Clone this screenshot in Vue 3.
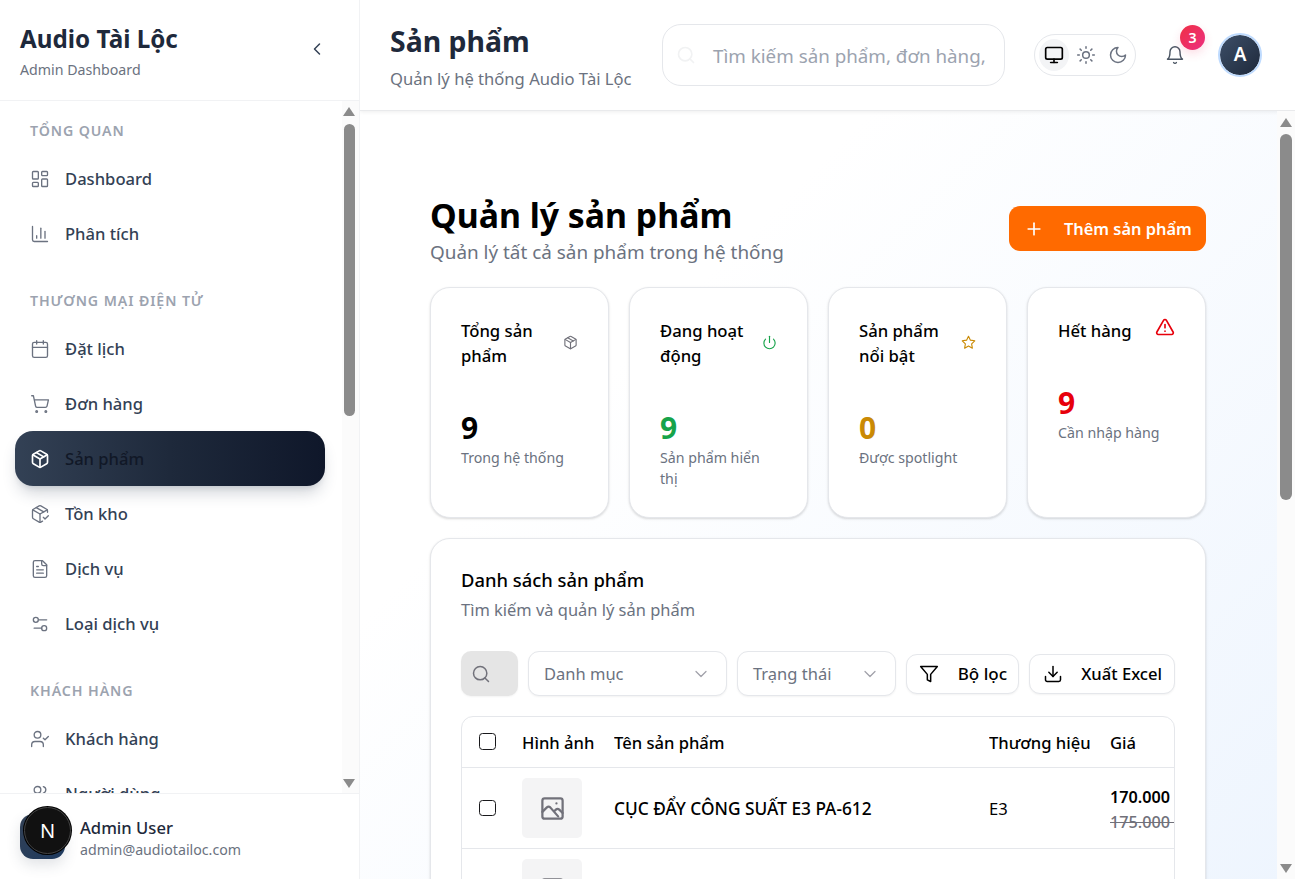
<script setup>
const icons = {
  dashboard: '<rect x="3" y="3" width="7" height="9" rx="1"/><rect x="14" y="3" width="7" height="5" rx="1"/><rect x="14" y="12" width="7" height="9" rx="1"/><rect x="3" y="16" width="7" height="5" rx="1"/>',
  chart: '<path d="M3 3v16a2 2 0 0 0 2 2h16"/><path d="M18 17V9"/><path d="M13 17V5"/><path d="M8 17v-3"/>',
  calendar: '<path d="M8 2v4"/><path d="M16 2v4"/><rect x="3" y="4" width="18" height="18" rx="2"/><path d="M3 10h18"/>',
  cart: '<circle cx="8" cy="21" r="1"/><circle cx="19" cy="21" r="1"/><path d="M2.05 2.05h2l2.66 12.42a2 2 0 0 0 2 1.58h9.78a2 2 0 0 0 1.95-1.57l1.65-7.43H5.12"/>',
  package: '<path d="M11 21.73a2 2 0 0 0 2 0l7-4A2 2 0 0 0 21 16V8a2 2 0 0 0-1-1.73l-7-4a2 2 0 0 0-2 0l-7 4A2 2 0 0 0 3 8v8a2 2 0 0 0 1 1.73z"/><path d="M12 22V12"/><polyline points="3.29 7 12 12 20.71 7"/><path d="m7.5 4.27 9 5.15"/>',
  packageCheck: '<path d="m16 16 2 2 4-4"/><path d="M21 10V8a2 2 0 0 0-1-1.73l-7-4a2 2 0 0 0-2 0l-7 4A2 2 0 0 0 3 8v8a2 2 0 0 0 1 1.73l7 4a2 2 0 0 0 2 0l2-1.14"/><path d="m7.5 4.27 9 5.15"/><polyline points="3.29 7 12 12 20.71 7"/><line x1="12" x2="12" y1="22" y2="12"/>',
  file: '<path d="M15 2H6a2 2 0 0 0-2 2v16a2 2 0 0 0 2 2h12a2 2 0 0 0 2-2V7Z"/><path d="M14 2v4a2 2 0 0 0 2 2h4"/><path d="M10 9H8"/><path d="M16 13H8"/><path d="M16 17H8"/>',
  settings: '<path d="M20 7h-9"/><path d="M14 17H5"/><circle cx="17" cy="17" r="3"/><circle cx="7" cy="7" r="3"/>',
  userCheck: '<path d="M16 21v-2a4 4 0 0 0-4-4H6a4 4 0 0 0-4 4v2"/><circle cx="9" cy="7" r="4"/><polyline points="16 11 18 13 22 9"/>',
  users: '<path d="M16 21v-2a4 4 0 0 0-4-4H6a4 4 0 0 0-4 4v2"/><circle cx="9" cy="7" r="4"/><path d="M22 21v-2a4 4 0 0 0-3-3.87"/><path d="M16 3.13a4 4 0 0 1 0 7.75"/>',
  left: '<path d="m15 18-6-6 6-6"/>',
  search: '<path d="m21 21-4.3-4.3"/><circle cx="11" cy="11" r="8"/>',
  monitor: '<rect x="2" y="3" width="20" height="14" rx="2"/><line x1="8" x2="16" y1="21" y2="21"/><line x1="12" x2="12" y1="17" y2="21"/>',
  sun: '<circle cx="12" cy="12" r="4"/><path d="M12 2v2"/><path d="M12 20v2"/><path d="m4.93 4.93 1.41 1.41"/><path d="m17.66 17.66 1.41 1.41"/><path d="M2 12h2"/><path d="M20 12h2"/><path d="m6.34 17.66-1.41 1.41"/><path d="m19.07 4.93-1.41 1.41"/>',
  moon: '<path d="M12 3a6 6 0 0 0 9 9 9 9 0 1 1-9-9Z"/>',
  bell: '<path d="M6 8a6 6 0 0 1 12 0c0 7 3 9 3 9H3s3-2 3-9"/><path d="M10.3 21a1.94 1.94 0 0 0 3.4 0"/>',
  plus: '<path d="M5 12h14"/><path d="M12 5v14"/>',
  power: '<path d="M12 2v10"/><path d="M18.4 6.6a9 9 0 1 1-12.77.04"/>',
  star: '<polygon points="12 2 15.09 8.26 22 9.27 17 14.14 18.18 21.02 12 17.77 5.82 21.02 7 14.14 2 9.27 8.91 8.26 12 2"/>',
  alert: '<path d="m21.73 18-8-14a2 2 0 0 0-3.48 0l-8 14A2 2 0 0 0 4 21h16a2 2 0 0 0 1.73-3"/><path d="M12 9v4"/><path d="M12 17h.01"/>',
  down: '<path d="m6 9 6 6 6-6"/>',
  funnel: '<path d="M22 3H2l8 9.46V19l4 2v-8.54L22 3z"/>',
  download: '<path d="M21 15v4a2 2 0 0 1-2 2H5a2 2 0 0 1-2-2v-4"/><polyline points="7 10 12 15 17 10"/><line x1="12" x2="12" y1="15" y2="3"/>',
  photo: '<path d="M15.5 7.5h.01"/><rect x="3" y="3" width="18" height="18" rx="2"/><path d="M3 15l4-4c.928-.893 2.072-.893 3 0l7 8"/><path d="M14 14l1-1c.928-.893 2.072-.893 3 0l3 3"/>'
}

const groups = [
  { label: 'Tổng quan', items: [
    { name: 'Dashboard', icon: 'dashboard' },
    { name: 'Phân tích', icon: 'chart' }
  ] },
  { label: 'Thương mại điện tử', items: [
    { name: 'Đặt lịch', icon: 'calendar' },
    { name: 'Đơn hàng', icon: 'cart' },
    { name: 'Sản phẩm', icon: 'package', active: true },
    { name: 'Tồn kho', icon: 'packageCheck' },
    { name: 'Dịch vụ', icon: 'file' },
    { name: 'Loại dịch vụ', icon: 'settings' }
  ] },
  { label: 'Khách hàng', items: [
    { name: 'Khách hàng', icon: 'userCheck' },
    { name: 'Người dùng', icon: 'users' }
  ] }
]

const stats = [
  { title: 'Tổng sản phẩm', icon: 'package', tone: 'grey', value: 9, note: 'Trong hệ thống' },
  { title: 'Đang hoạt động', icon: 'power', tone: 'green', value: 9, note: 'Sản phẩm hiển thị' },
  { title: 'Sản phẩm nổi bật', icon: 'star', tone: 'amber', value: 0, note: 'Được spotlight' },
  { title: 'Hết hàng', icon: 'alert', tone: 'red', value: 9, note: 'Cần nhập hàng', wide: true }
]
</script>

<template>
  <div class="shell">
    <aside class="sidebar">
      <div class="brand">
        <div>
          <div class="brand-name">Audio Tài Lộc</div>
          <div class="brand-sub">Admin Dashboard</div>
        </div>
        <svg class="icon collapse" viewBox="0 0 24 24" v-html="icons.left"></svg>
      </div>
      <nav class="nav">
        <section v-for="g in groups" :key="g.label" class="group">
          <div class="group-label">{{ g.label }}</div>
          <a v-for="it in g.items" :key="it.name" class="nav-item" :class="{ active: it.active }">
            <svg class="icon nav-icon" viewBox="0 0 24 24" v-html="icons[it.icon]"></svg>
            <span>{{ it.name }}</span>
          </a>
        </section>
        <div class="scrollbar side-bar">
          <i class="arrow up"></i><i class="thumb"></i><i class="arrow dn"></i>
        </div>
      </nav>
      <div class="account">
        <div class="account-square"></div>
        <div>
          <div class="account-name">Admin User</div>
          <div class="account-mail">admin@audiotailoc.com</div>
        </div>
        <div class="next-badge">N</div>
      </div>
    </aside>

    <div class="main">
      <header class="topbar">
        <div class="top-title">
          <h2>Sản phẩm</h2>
          <p>Quản lý hệ thống Audio Tài Lộc</p>
        </div>
        <div class="top-search">
          <svg class="icon" viewBox="0 0 24 24" v-html="icons.search"></svg>
          <span>Tìm kiếm sản phẩm, đơn hàng,</span>
        </div>
        <div class="theme">
          <span class="theme-btn on"><svg class="icon" viewBox="0 0 24 24" v-html="icons.monitor"></svg></span>
          <span class="theme-btn"><svg class="icon" viewBox="0 0 24 24" v-html="icons.sun"></svg></span>
          <span class="theme-btn"><svg class="icon" viewBox="0 0 24 24" v-html="icons.moon"></svg></span>
        </div>
        <div class="bell">
          <svg class="icon" viewBox="0 0 24 24" v-html="icons.bell"></svg>
          <b class="badge">3</b>
        </div>
        <div class="avatar">A</div>
      </header>

      <div class="scroller">
        <main class="content">
          <div class="page-head">
            <div>
              <h1>Quản lý sản phẩm</h1>
              <p>Quản lý tất cả sản phẩm trong hệ thống</p>
            </div>
            <button class="add">
              <svg class="icon" viewBox="0 0 24 24" v-html="icons.plus"></svg>
              <span>Thêm sản phẩm</span>
            </button>
          </div>

          <div class="stats">
            <div v-for="s in stats" :key="s.title" class="stat" :class="s.tone">
              <div class="stat-head">
                <div class="stat-title">{{ s.title }}</div>
                <svg class="icon stat-icon" :class="{ wide: s.wide }" viewBox="0 0 24 24" v-html="icons[s.icon]"></svg>
              </div>
              <div class="stat-value">{{ s.value }}</div>
              <div class="stat-note">{{ s.note }}</div>
            </div>
          </div>

          <div class="list">
            <h3>Danh sách sản phẩm</h3>
            <p class="list-sub">Tìm kiếm và quản lý sản phẩm</p>
            <div class="tools">
              <div class="tool-search"><svg class="icon" viewBox="0 0 24 24" v-html="icons.search"></svg></div>
              <div class="select cat"><span>Danh mục</span><svg class="icon" viewBox="0 0 24 24" v-html="icons.down"></svg></div>
              <div class="select state"><span>Trạng thái</span><svg class="icon" viewBox="0 0 24 24" v-html="icons.down"></svg></div>
              <button class="tool-btn filter"><svg class="icon" viewBox="0 0 24 24" v-html="icons.funnel"></svg><span>Bộ lọc</span></button>
              <button class="tool-btn export"><svg class="icon" viewBox="0 0 24 24" v-html="icons.download"></svg><span>Xuất Excel</span></button>
            </div>
            <div class="table">
              <div class="row head">
                <div class="cell"><i class="check"></i></div>
                <div class="cell">Hình ảnh</div>
                <div class="cell">Tên sản phẩm</div>
                <div class="cell">Thương hiệu</div>
                <div class="cell">Giá</div>
              </div>
              <div class="row">
                <div class="cell"><i class="check"></i></div>
                <div class="cell"><div class="thumb-box"><svg class="icon" viewBox="0 0 24 24" v-html="icons.photo"></svg></div></div>
                <div class="cell strong">CỤC ĐẨY CÔNG SUẤT E3 PA-612</div>
                <div class="cell plain">E3</div>
                <div class="cell price"><b>170.000</b><s>175.000&nbsp;</s></div>
              </div>
              <div class="row">
                <div class="cell"><i class="check"></i></div>
                <div class="cell"><div class="thumb-box"><svg class="icon" viewBox="0 0 24 24" v-html="icons.photo"></svg></div></div>
                <div class="cell strong"></div>
                <div class="cell plain"></div>
                <div class="cell price"></div>
              </div>
            </div>
          </div>
        </main>
        <div class="scrollbar main-bar">
          <i class="arrow up"></i><i class="thumb"></i><i class="arrow dn"></i>
        </div>
      </div>
    </div>
  </div>
</template>

<style>
html, body { margin: 0; height: 100%; overflow: hidden; }
</style>

<style scoped>
.shell {
  display: flex;
  height: 879px;
  font-family: "Noto Sans", sans-serif;
  color: #000;
  background: #fff;
  overflow: hidden;
}
.icon {
  width: 20px;
  height: 20px;
  fill: none;
  stroke: currentColor;
  stroke-width: 2;
  stroke-linecap: round;
  stroke-linejoin: round;
  flex: none;
}

/* sidebar */
.sidebar {
  width: 360px;
  flex: none;
  display: flex;
  flex-direction: column;
  border-right: 1px solid #f1f2f4;
  box-sizing: border-box;
  background: #fff;
  position: relative;
  z-index: 2;
}
.brand {
  height: 101px;
  box-sizing: border-box;
  padding: 22px 32px 0 20px;
  display: flex;
  justify-content: space-between;
  border-bottom: 1px solid #f1f2f4;
  flex: none;
}
.brand-name { font-size: 24.2px; line-height: 34px; font-weight: 700; color: #1e293b; }
.brand-sub { font-size: 14.2px; line-height: 20px; margin-top: 4px; color: #6b7280; }
.collapse { width: 20px; height: 20px; margin-top: 17px; stroke-width: 1.8; color: #334155; }
.nav {
  flex: 1;
  min-height: 0;
  overflow: hidden;
  position: relative;
  padding: 20px 34px 0 15px;
}
.group { margin-bottom: 30px; }
.group-label {
  height: 20px;
  line-height: 20px;
  margin: 0 0 10px 15px;
  font-size: 14.2px;
  font-weight: 600;
  letter-spacing: 0.9px;
  text-transform: uppercase;
  color: #9ca3af;
  white-space: nowrap;
}
.nav-item {
  height: 55px;
  display: flex;
  align-items: center;
  gap: 15px;
  padding-left: 15px;
  border-radius: 18px;
  font-size: 16.6px;
  font-weight: 500;
  color: #334155;
}
.nav-icon { stroke-width: 1.6; color: #6b7280; }
.nav-item.active {
  background: linear-gradient(90deg, #334155, #1e293b 50%, #0f172a);
  box-shadow: 0 10px 15px -3px rgba(51, 65, 85, .22), 0 4px 6px -4px rgba(51, 65, 85, .2);
  color: #111827;
}
.nav-item.active .nav-icon { color: #fff; stroke-width: 2; }

.account {
  height: 86px;
  flex: none;
  box-sizing: border-box;
  border-top: 1px solid #f1f2f4;
  padding: 20px;
  display: flex;
  gap: 15px;
  position: relative;
  background: #fff;
}
.account-square {
  width: 45px;
  height: 45px;
  border-radius: 13px;
  background: linear-gradient(135deg, #334155, #1e3a5f);
  box-shadow: 0 6px 14px rgba(51, 65, 85, .15);
  flex: none;
}
.account-name { font-size: 16.6px; line-height: 25px; font-weight: 500; color: #1e293b; margin-top: 1px; }
.account-mail { font-size: 14.2px; line-height: 20px; color: #6b7280; margin-top: 0; }
.next-badge {
  position: absolute;
  left: 24px;
  top: 13px;
  width: 47px;
  height: 47px;
  box-sizing: border-box;
  border-radius: 50%;
  background: #111;
  border: 1px solid #444;
  box-shadow: 0 0 0 1px #000;
  color: #fff;
  font-size: 20px;
  text-align: center;
  line-height: 45px;
}

/* scrollbars */
.scrollbar {
  position: absolute;
  top: 0;
  right: 0;
  background: #fbfbfb;
}
.scrollbar .thumb {
  position: absolute;
  left: 3px;
  right: 3px;
  background: #8b8b8b;
  border-radius: 6px;
  display: block;
}
.arrow {
  position: absolute;
  left: 50%;
  margin-left: -6.5px;
  width: 0;
  height: 0;
  border-left: 6.5px solid transparent;
  border-right: 6.5px solid transparent;
  display: block;
}
.arrow.up { border-bottom: 9px solid #8b8b8b; }
.arrow.dn { border-top: 9px solid #8b8b8b; }
.side-bar { width: 17px; height: 692px; top: 0; }
.side-bar .arrow { margin-left: -7.5px; }
.side-bar .arrow.up { top: 6px; }
.side-bar .thumb { top: 23px; height: 292px; left: 2px; right: 4px; }
.side-bar .arrow.dn { bottom: 5px; }
.main-bar { width: 18px; bottom: 0; z-index: 1; }
.main-bar .arrow.up { top: 7px; }
.main-bar .thumb { top: 23px; height: 366px; }
.main-bar .arrow.dn { bottom: 6px; }

/* main */
.main { flex: 1; min-width: 0; display: flex; flex-direction: column; }
.topbar {
  height: 111px;
  flex: none;
  box-sizing: border-box;
  padding: 24px 33px 0 30px;
  display: flex;
  align-items: flex-start;
  border-bottom: 1px solid #e9eaec;
  box-shadow: 0 1px 4px rgba(0, 0, 0, .07);
  position: relative;
  z-index: 1;
  background: #fff;
}
.top-title { width: 272px; flex: none; }
.top-title h2 { margin: -1px 0 0; font-size: 28.4px; line-height: 36px; font-weight: 700; color: #1e293b; }
.top-title p { margin: 6px 0 0; font-size: 16.6px; line-height: 28px; color: #6b7280; white-space: nowrap; }
.top-search {
  width: 343px;
  height: 62px;
  box-sizing: border-box;
  border: 1px solid #e5e7eb;
  border-radius: 19px;
  display: flex;
  align-items: center;
  gap: 17px;
  padding-left: 13px;
  font-size: 18.8px;
  color: #9ca3af;
  white-space: nowrap;
  overflow: hidden;
  flex: none;
}
.top-search span { padding-top: 1px; }
.top-search .icon { color: #f1f2f3; }
.theme {
  margin: 10px 0 0 29px;
  width: 102px;
  height: 42px;
  box-sizing: border-box;
  border: 1px solid #e5e7eb;
  border-radius: 21px;
  display: flex;
  align-items: center;
  padding-left: 4px;
  flex: none;
}
.theme-btn { width: 32px; height: 32px; display: flex; align-items: center; justify-content: center; color: #6b7280; border-radius: 50%; margin-right: 2px; }
.theme-btn .icon { stroke-width: 1.8; }
.theme-btn.on { background: #f3f4f6; color: #000; }
.theme-btn.on .icon { stroke-width: 2; }
.bell { position: relative; margin: 21px 0 0 29px; width: 20px; height: 20px; color: #4b5563; flex: none; }
.bell .icon { display: block; stroke-width: 1.7; }
.badge {
  position: absolute;
  left: 15px;
  top: -20px;
  width: 25px;
  height: 25px;
  border-radius: 50%;
  background: linear-gradient(135deg, #ef2f45, #ec2f80);
  box-shadow: 0 4px 10px rgba(236, 47, 100, .16);
  color: #fff;
  font-size: 14.2px;
  line-height: 25px;
  font-weight: 600;
  text-align: center;
}
.avatar {
  margin: 9px 0 0 33px;
  width: 44px;
  height: 44px;
  box-sizing: border-box;
  border: 2.5px solid #bfdbfe;
  border-radius: 50%;
  background: linear-gradient(135deg, #3d4f68, #1e293b);
  background-clip: padding-box;
  color: #fff;
  font-size: 18.9px;
  font-weight: 600;
  text-align: center;
  line-height: 39px;
  flex: none;
}

.scroller {
  flex: 1;
  min-height: 0;
  position: relative;
  overflow: hidden;
  background: linear-gradient(135deg, #ffffff 30%, #eef5fe 100%);
}
.content { padding: 82px 89px 0 70px; }
.page-head { display: flex; justify-content: space-between; height: 94px; }
.page-head h1 { margin: 0; font-size: 33.8px; line-height: 45px; font-weight: 700; color: #000; }
.page-head p { margin: -1px 0 0; font-size: 18.9px; line-height: 30px; color: #6b7280; }
.add {
  width: 197px;
  height: 45px;
  margin-top: 13px;
  border: 0;
  border-radius: 11px;
  background: #ff6a00;
  color: #fff;
  display: flex;
  align-items: center;
  gap: 20px;
  padding: 0 15px;
  font: 600 16.4px "Noto Sans", sans-serif;
  box-sizing: border-box;
  white-space: nowrap;
}
.stats { display: grid; grid-template-columns: repeat(4, 179px); gap: 20px; }
.stat {
  height: 231px;
  box-sizing: border-box;
  padding: 30px;
  border: 1px solid #e5e7eb;
  border-radius: 20px;
  background: #fff;
  box-shadow: 0 1px 3px rgba(0, 0, 0, .1), 0 1px 2px rgba(0, 0, 0, .06);
}
.stat-head { display: flex; justify-content: space-between; align-items: center; gap: 10px; min-height: 50px; }
.stat-title { font-size: 16.7px; line-height: 25px; font-weight: 500; color: #000; }
.stat-icon { width: 15px; height: 15px; margin: -1px 0 1px; stroke-width: 1.8; }
.stat-icon.wide { width: 20px; height: 20px; align-self: flex-start; stroke-width: 2; }
.stat:last-child .stat-head { min-height: 25px; }
.stat-value { margin-top: 42px; font-size: 30px; line-height: 36px; font-weight: 700; }
.stat-note { margin-top: 1px; font-size: 14.2px; line-height: 21px; color: #6b7280; }
.stat.grey .stat-icon { color: #71717a; }
.stat.green .stat-icon, .stat.green .stat-value { color: #16a34a; }
.stat.amber .stat-icon, .stat.amber .stat-value { color: #ca8a04; }
.stat.red .stat-icon, .stat.red .stat-value { color: #e7000b; }
.stat.grey .stat-value { color: #000; }

.list {
  margin-top: 20px;
  box-sizing: border-box;
  height: 500px;
  padding: 28px 30px 30px;
  border: 1px solid #e5e7eb;
  border-radius: 20px;
  background: #fff;
  box-shadow: 0 1px 3px rgba(0, 0, 0, .1), 0 1px 2px rgba(0, 0, 0, .06);
}
.list h3 { margin: 0; font-size: 18.4px; line-height: 25px; font-weight: 500; color: #000; }
.list-sub { margin: 5px 0 0; font-size: 16.45px; line-height: 25px; color: #6b7280; }
.tools { margin-top: 29px; display: flex; align-items: center; gap: 10px; }
.tool-search {
  width: 57px;
  height: 45px;
  box-sizing: border-box;
  padding: 13px 0 0 10px;
  border-radius: 10px;
  background: #e5e5e5;
  color: #71717a;
  box-shadow: 0 1px 2px rgba(0, 0, 0, .05);
  flex: none;
}
.tool-search .icon { display: block; stroke-width: 1.8; }
.select {
  height: 45px;
  box-sizing: border-box;
  border: 1px solid #e5e7eb;
  border-radius: 11px;
  display: flex;
  align-items: center;
  justify-content: space-between;
  padding: 0 16px 0 15px;
  font-size: 16.5px;
  color: #6b7280;
  box-shadow: 0 1px 2px rgba(0, 0, 0, .05);
  background: #fff;
  flex: none;
}
.select .icon { color: #a1a1aa; stroke-width: 1.5; margin-right: -1px; }
.cat { width: 199px; }
.state { width: 159px; }
.tool-btn {
  height: 40px;
  box-sizing: border-box;
  border: 1px solid #e5e7eb;
  border-radius: 11px;
  background: #fff;
  display: flex;
  align-items: center;
  padding: 0 12px;
  justify-content: space-between;
  font: 500 16.6px "Noto Sans", sans-serif;
  color: #000;
  box-shadow: 0 1px 2px rgba(0, 0, 0, .05);
  flex: none;
}
.filter { width: 113px; padding-right: 11px; font-size: 17px; }
.export { width: 146px; padding-left: 13px; }
.tool-btn .icon { stroke-width: 1.8; }
.table {
  margin-top: 20px;
  border: 1px solid #e5e7eb;
  border-radius: 12px;
  overflow: hidden;
}
.row {
  display: grid;
  grid-template-columns: 60px 92px 375px 121px 64px;
  height: 81px;
  border-bottom: 1px solid #e5e7eb;
  box-sizing: border-box;
  font-size: 16.6px;
}
.row.head { height: 51px; font-weight: 500; }
.cell { display: flex; align-items: center; white-space: nowrap; overflow: hidden; }
.cell:first-child { padding-left: 17px; box-sizing: border-box; }
.head .cell:first-child { padding-bottom: 1px; }
.check {
  width: 16.5px;
  height: 16.5px;
  box-sizing: border-box;
  border: 1.5px solid #18181b;
  border-radius: 3.5px;
  display: block;
}
.thumb-box {
  width: 60px;
  height: 60px;
  border-radius: 5px;
  background: #f4f4f5;
  display: flex;
  align-items: center;
  justify-content: center;
  color: #71717a;
}
.thumb-box .icon { width: 27px; height: 27px; }
.strong { font-weight: 500; font-size: 17.3px; }
.plain { font-weight: 400; }
.price { flex-direction: column; align-items: flex-start; justify-content: center; line-height: 25px; font-size: 16.2px; padding-top: 3px; box-sizing: border-box; }
.price b { font-weight: 600; }
.price s { color: #71717a; font-weight: 500; }
</style>
